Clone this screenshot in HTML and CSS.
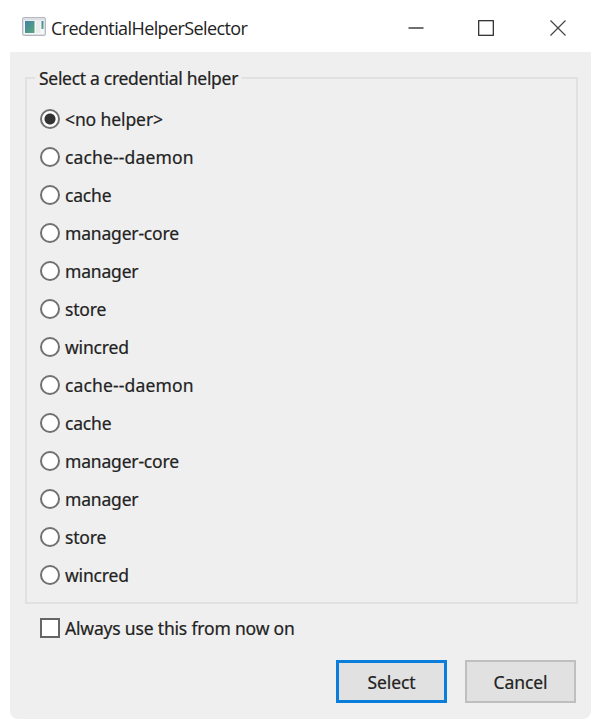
FILE: index.html
```html
<!DOCTYPE html>
<html lang="en">
<head>
    <meta charset="UTF-8">
    <meta name="viewport" content="width=device-width, initial-scale=1.0">
    <title>CredentialHelperSelector</title>
    <link rel="stylesheet" href="styles.css">
</head>
<body>
    <div class="window">
        <div class="titlebar">
            <svg class="app-icon" width="24" height="20" viewBox="0 0 24 20">
                <defs>
                    <linearGradient id="pane" x1="0" y1="0" x2="1" y2="1">
                        <stop offset="0" stop-color="#4281a8"/>
                        <stop offset="1" stop-color="#58a878"/>
                    </linearGradient>
                </defs>
                <rect x="0.5" y="0.5" width="23" height="18" rx="1.5" fill="#dcdfe4" stroke="#b4b9c1"/>
                <rect x="2" y="3.5" width="20" height="13.5" fill="#f7f8f9"/>
                <rect x="3" y="4" width="9.5" height="12" fill="url(#pane)"/>
                <rect x="14" y="4" width="4.5" height="12" fill="#ececee"/>
                <rect x="19.5" y="4" width="2" height="8" fill="url(#pane)"/>
            </svg>
            <span class="title">CredentialHelperSelector</span>
            <div class="controls">
                <svg width="16" height="16" viewBox="0 0 16 16"><path d="M0.5 8H15.5" stroke="#222" stroke-width="1.3"/></svg>
                <svg width="16" height="16" viewBox="0 0 16 16"><rect x="0.7" y="0.7" width="14.6" height="14.6" fill="none" stroke="#222" stroke-width="1.2"/></svg>
                <svg class="close" width="16" height="16" viewBox="0 0 16 16"><path d="M0.5 0.5L15.5 15.5M15.5 0.5L0.5 15.5" stroke="#444" stroke-width="1.2"/></svg>
            </div>
        </div>
        <form class="content">
            <fieldset class="helpers">
                <legend>Select a credential helper</legend>
                <label class="option first"><input type="radio" name="helper" checked><span>&lt;no helper&gt;</span></label>
                <label class="option"><input type="radio" name="helper"><span class="wide">cache--daemon</span></label>
                <label class="option"><input type="radio" name="helper"><span>cache</span></label>
                <label class="option"><input type="radio" name="helper"><span>manager-core</span></label>
                <label class="option"><input type="radio" name="helper"><span>manager</span></label>
                <label class="option"><input type="radio" name="helper"><span>store</span></label>
                <label class="option"><input type="radio" name="helper"><span>wincred</span></label>
                <label class="option"><input type="radio" name="helper"><span class="wide">cache--daemon</span></label>
                <label class="option"><input type="radio" name="helper"><span>cache</span></label>
                <label class="option"><input type="radio" name="helper"><span>manager-core</span></label>
                <label class="option"><input type="radio" name="helper"><span>manager</span></label>
                <label class="option"><input type="radio" name="helper"><span>store</span></label>
                <label class="option"><input type="radio" name="helper"><span>wincred</span></label>
            </fieldset>
            <label class="option always"><input type="checkbox"><span>Always use this from now on</span></label>
            <div class="buttons">
                <button type="button" class="select">Select</button>
                <button type="button" class="cancel">Cancel</button>
            </div>
        </form>
    </div>
</body>
</html>
```

FILE: styles.css
```css
* {
    box-sizing: border-box;
}

body {
    margin: 0;
    padding: 0 5px 0 10px;
    background-color: #fff;
    color: #222;
    font-family: "Noto Sans", "Open Sans", sans-serif;
    font-size: 17.5px;
}

.window {
    height: 719px;
    border-radius: 0 0 8px 8px;
    background-color: #efefef;
}

.titlebar {
    display: flex;
    align-items: center;
    height: 52px;
    padding: 3px 25px 0 12px;
    background-color: #fff;
}

.app-icon {
    margin: -1px 5px 0 0;
}

.title {
    font-family: "Open Sans", sans-serif;
    font-size: 18px;
    letter-spacing: -0.6px;
    line-height: 24px;
}

.controls {
    display: flex;
    gap: 54px;
    margin-left: auto;
}

.controls svg {
    display: block;
}

.controls .close {
    margin-left: 2px;
}

.content {
    padding: 14px 13px 0 15px;
    -webkit-text-stroke: 0.2px #222;
}

.helpers {
    height: 538px;
    margin: 0;
    padding: 0 13px;
    border: 2px solid #e1e1e1;
}

legend {
    height: 24px;
    margin-left: -5px;
    padding: 0 4px;
    letter-spacing: -0.3px;
    line-height: 24px;
    white-space: nowrap;
}

.option {
    display: flex;
    align-items: center;
    gap: 5px;
    height: 38px;
    letter-spacing: -0.18px;
    line-height: 24px;
    white-space: nowrap;
}

.option .wide {
    letter-spacing: 0.15px;
}

.option.first {
    margin-top: 10px;
    letter-spacing: -0.1px;
}

input {
    flex: none;
    width: 20px;
    height: 20px;
    margin: 0;
    border: 2px solid #666;
    background-color: #fff;
    appearance: none;
}

input[type="radio"] {
    border-color: #717171;
    border-radius: 50%;
}

input[type="radio"]:checked {
    background-image: radial-gradient(circle, #333 5px, #fff 6px);
}

.always {
    margin: 5px 0 0 15px;
}

.buttons {
    display: flex;
    justify-content: flex-end;
    gap: 18px;
    margin: 13px 2px 0 0;
}

button {
    width: 111px;
    height: 43px;
    padding: 0;
    border: 2px solid #bfbfbf;
    background-color: #e1e1e1;
    color: #222;
    font: inherit;
    letter-spacing: -0.1px;
}

.select {
    border: 3px solid #0b7dda;
}
```
